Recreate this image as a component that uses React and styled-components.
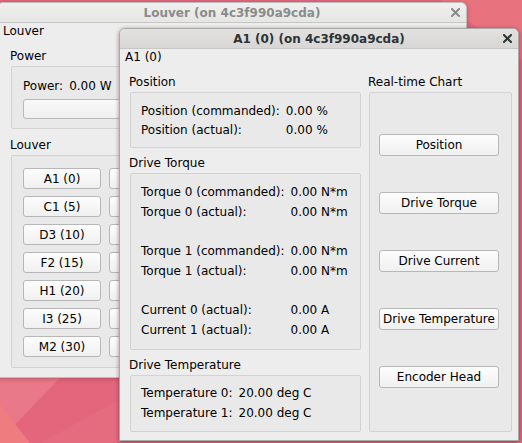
import React from 'react'
import styled, { createGlobalStyle } from 'styled-components'

const GlobalStyle = createGlobalStyle`
  body {
    margin: 0;
    font-family: "DejaVu Sans", "Liberation Sans", sans-serif;
    font-size: 12px;
    color: #000;
  }
`

function CloseIcon({ active }) {
  return (
    <svg width="9" height="9" viewBox="0 0 9 9">
      <path
        d="M1 1 L8 8 M8 1 L1 8"
        stroke={active ? '#2e3436' : '#8a8a8a'}
        strokeWidth="2"
        strokeLinecap="square"
      />
    </svg>
  )
}

function Wallpaper() {
  return (
    <StyledWallpaper viewBox="0 0 522 443" preserveAspectRatio="none">
      <rect width="522" height="443" fill="#e3667d" />
      <polygon points="0,378 60,378 0,440" fill="#e97888" />
      <polygon points="0,405 30,443 0,443" fill="#ef7d80" />
      <polygon points="40,443 119,400 119,443" fill="#e56b7f" />
      <polygon points="440,0 522,0 522,60" fill="#e9727f" />
    </StyledWallpaper>
  )
}

function Group({ title, children, $grow }) {
  return (
    <StyledGroup $grow={$grow}>
      <StyledGroupTitle>{title}</StyledGroupTitle>
      {children}
    </StyledGroup>
  )
}

// only the first column of the louver grid shows; the rest sits under the dialog
const louverButtons = ['A1 (0)', 'C1 (5)', 'D3 (10)', 'F2 (15)', 'H1 (20)', 'I3 (25)', 'M2 (30)']

const torqueRows = [
  ['Torque 0 (commanded):', '0.00 N*m'],
  ['Torque 0 (actual):', '0.00 N*m'],
  null,
  ['Torque 1 (commanded):', '0.00 N*m'],
  ['Torque 1 (actual):', '0.00 N*m'],
  null,
  ['Current 0 (actual):', '0.00 A'],
  ['Current 1 (actual):', '0.00 A']
]

const chartButtons = ['Position', 'Drive Torque', 'Drive Current', 'Drive Temperature', 'Encoder Head']

function ValueGrid({ rows, $row }) {
  return (
    <StyledValueGrid $row={$row}>
      {rows.map((r, i) =>
        r ? (
          <React.Fragment key={i}>
            <span>{r[0]}</span>
            <span>{r[1]}</span>
          </React.Fragment>
        ) : (
          <StyledSpacer key={i} />
        )
      )}
    </StyledValueGrid>
  )
}

export default function App() {
  return (
    <>
      <GlobalStyle />
      <StyledDesktop>
        <Wallpaper />

        <StyledWindow $left={-3} $top={2} $width={470} $height={376}>
          <StyledTitleBar>
            <StyledTitle>Louver (on 4c3f990a9cda)</StyledTitle>
            <StyledClose>
              <CloseIcon />
            </StyledClose>
          </StyledTitleBar>
          <StyledHeader>Louver</StyledHeader>
          <StyledLouverBody>
            <Group title="Power">
              <StyledPowerBox>
                <StyledValueGrid $row={19}>
                  <span>Power:</span>
                  <span>0.00 W</span>
                </StyledValueGrid>
                <StyledBar />
              </StyledPowerBox>
            </Group>
            <Group title="Louver">
              <StyledLouverBox>
                {louverButtons.map(b => (
                  <React.Fragment key={b}>
                    <StyledButton>{b}</StyledButton>
                    <StyledButton />
                    <StyledButton />
                    <StyledButton />
                  </React.Fragment>
                ))}
              </StyledLouverBox>
            </Group>
          </StyledLouverBody>
        </StyledWindow>

        <StyledWindow $left={119} $top={28} $width={400} $height={413} $active>
          <StyledTitleBar $active>
            <StyledTitle $active>A1 (0) (on 4c3f990a9cda)</StyledTitle>
            <StyledClose>
              <CloseIcon active />
            </StyledClose>
          </StyledTitleBar>
          <StyledHeader>A1 (0)</StyledHeader>
          <StyledColumns>
            <StyledLeftColumn>
              <Group title="Position">
                <StyledBox $pad="8px 10px 8px">
                  <ValueGrid
                    $row={19}
                    rows={[
                      ['Position (commanded):', '0.00 %'],
                      ['Position (actual):', '0.00 %']
                    ]}
                  />
                </StyledBox>
              </Group>
              <Group title="Drive Torque">
                <StyledBox $pad="8px 10px 9px">
                  <ValueGrid $row={19.75} rows={torqueRows} />
                </StyledBox>
              </Group>
              <Group title="Drive Temperature">
                <StyledBox $pad="7px 10px 8px">
                  <ValueGrid
                    $row={20}
                    rows={[
                      ['Temperature 0:', '20.00 deg C'],
                      ['Temperature 1:', '20.00 deg C']
                    ]}
                  />
                </StyledBox>
              </Group>
            </StyledLeftColumn>
            <StyledRightColumn>
              <Group title="Real-time Chart" $grow>
                <StyledChartBox>
                  {chartButtons.map(b => (
                    <StyledChartButton key={b}>{b}</StyledChartButton>
                  ))}
                </StyledChartBox>
              </Group>
            </StyledRightColumn>
          </StyledColumns>
        </StyledWindow>
      </StyledDesktop>
    </>
  )
}

const StyledDesktop = styled.div`
  position: relative;
  width: 522px;
  height: 443px;
  overflow: hidden;
`

const StyledWallpaper = styled.svg`
  position: absolute;
  inset: 0;
  width: 522px;
  height: 443px;
`

const StyledWindow = styled.div`
  position: absolute;
  left: ${p => p.$left}px;
  top: ${p => p.$top}px;
  width: ${p => p.$width}px;
  height: ${p => p.$height}px;
  box-sizing: border-box;
  display: flex;
  flex-direction: column;
  background: #ededed;
  border: 1px solid ${p => (p.$active ? '#a9a9a9' : '#bdbdbd')};
  border-radius: 6px 6px 0 0;
  box-shadow: 0 1px 4px rgba(60, 0, 10, ${p => (p.$active ? 0.45 : 0.25)});
  overflow: hidden;
`

const StyledTitleBar = styled.div`
  position: relative;
  flex: none;
  height: 19px;
  display: flex;
  align-items: center;
  justify-content: center;
  background: ${p =>
    p.$active
      ? 'linear-gradient(#e2e1df, #d8d7d5)'
      : 'linear-gradient(#efefee, #e6e6e5)'};
  border-bottom: 1px solid #c6c6c4;
`

const StyledTitle = styled.div`
  font-weight: bold;
  font-size: 12px;
  color: ${p => (p.$active ? '#2e3436' : '#8b8b8b')};
`

const StyledClose = styled.div`
  position: absolute;
  right: 6px;
  top: 5px;
  display: flex;
`

const StyledHeader = styled.div`
  flex: none;
  height: 16px;
  line-height: 16px;
  padding-left: 5px;
`

const StyledLouverBody = styled.div`
  display: flex;
  flex-direction: column;
  gap: 6px;
  padding: 7px 0 0 13px;
`

const StyledColumns = styled.div`
  flex: 1;
  display: flex;
  gap: 8px;
  padding: 7px 6px 9px 10px;
`

const StyledLeftColumn = styled.div`
  width: 231px;
  display: flex;
  flex-direction: column;
  gap: 5px;
`

const StyledRightColumn = styled.div`
  flex: 1;
  display: flex;
  flex-direction: column;
`

const StyledGroup = styled.div`
  display: flex;
  flex-direction: column;
  flex: ${p => (p.$grow ? 1 : 'none')};
`

const StyledGroupTitle = styled.div`
  height: 20px;
  line-height: 20px;
  margin-left: -1px;
`

const StyledBox = styled.div`
  border: 1px solid #d2d2d2;
  border-radius: 2px;
  background: #e9e9e9;
  padding: ${p => p.$pad};
`

const StyledPowerBox = styled(StyledBox)`
  width: 440px;
  padding: 9px 11px 9px;
  display: flex;
  flex-direction: column;
  gap: 4px;
`

const StyledBar = styled.div`
  height: 18px;
  border: 1px solid #b9b9b9;
  border-radius: 3px;
  background: linear-gradient(#f9f9f9, #efefef);
`

const StyledLouverBox = styled(StyledBox)`
  width: 440px;
  padding: 12px 11px 10px;
  display: grid;
  grid-template-columns: repeat(4, 78px);
  column-gap: 8px;
  row-gap: 7px;
`

const StyledValueGrid = styled.div`
  display: grid;
  grid-template-columns: max-content max-content;
  grid-auto-rows: ${p => p.$row}px;
  column-gap: 6px;
  align-items: center;
  white-space: pre;
`

const StyledSpacer = styled.div`
  grid-column: 1 / -1;
`

const StyledButton = styled.div`
  box-sizing: border-box;
  height: 21px;
  display: flex;
  align-items: center;
  justify-content: center;
  border: 1px solid #b7b7b7;
  border-radius: 3px;
  background: linear-gradient(#fdfdfd, #f0f0f0);
  white-space: nowrap;
`

const StyledChartBox = styled(StyledBox)`
  flex: 1;
  display: flex;
  flex-direction: column;
  align-items: flex-start;
  gap: 36px;
  padding: 41px 0 0 9px;
`

const StyledChartButton = styled(StyledButton)`
  width: 120px;
  height: 22px;
`
